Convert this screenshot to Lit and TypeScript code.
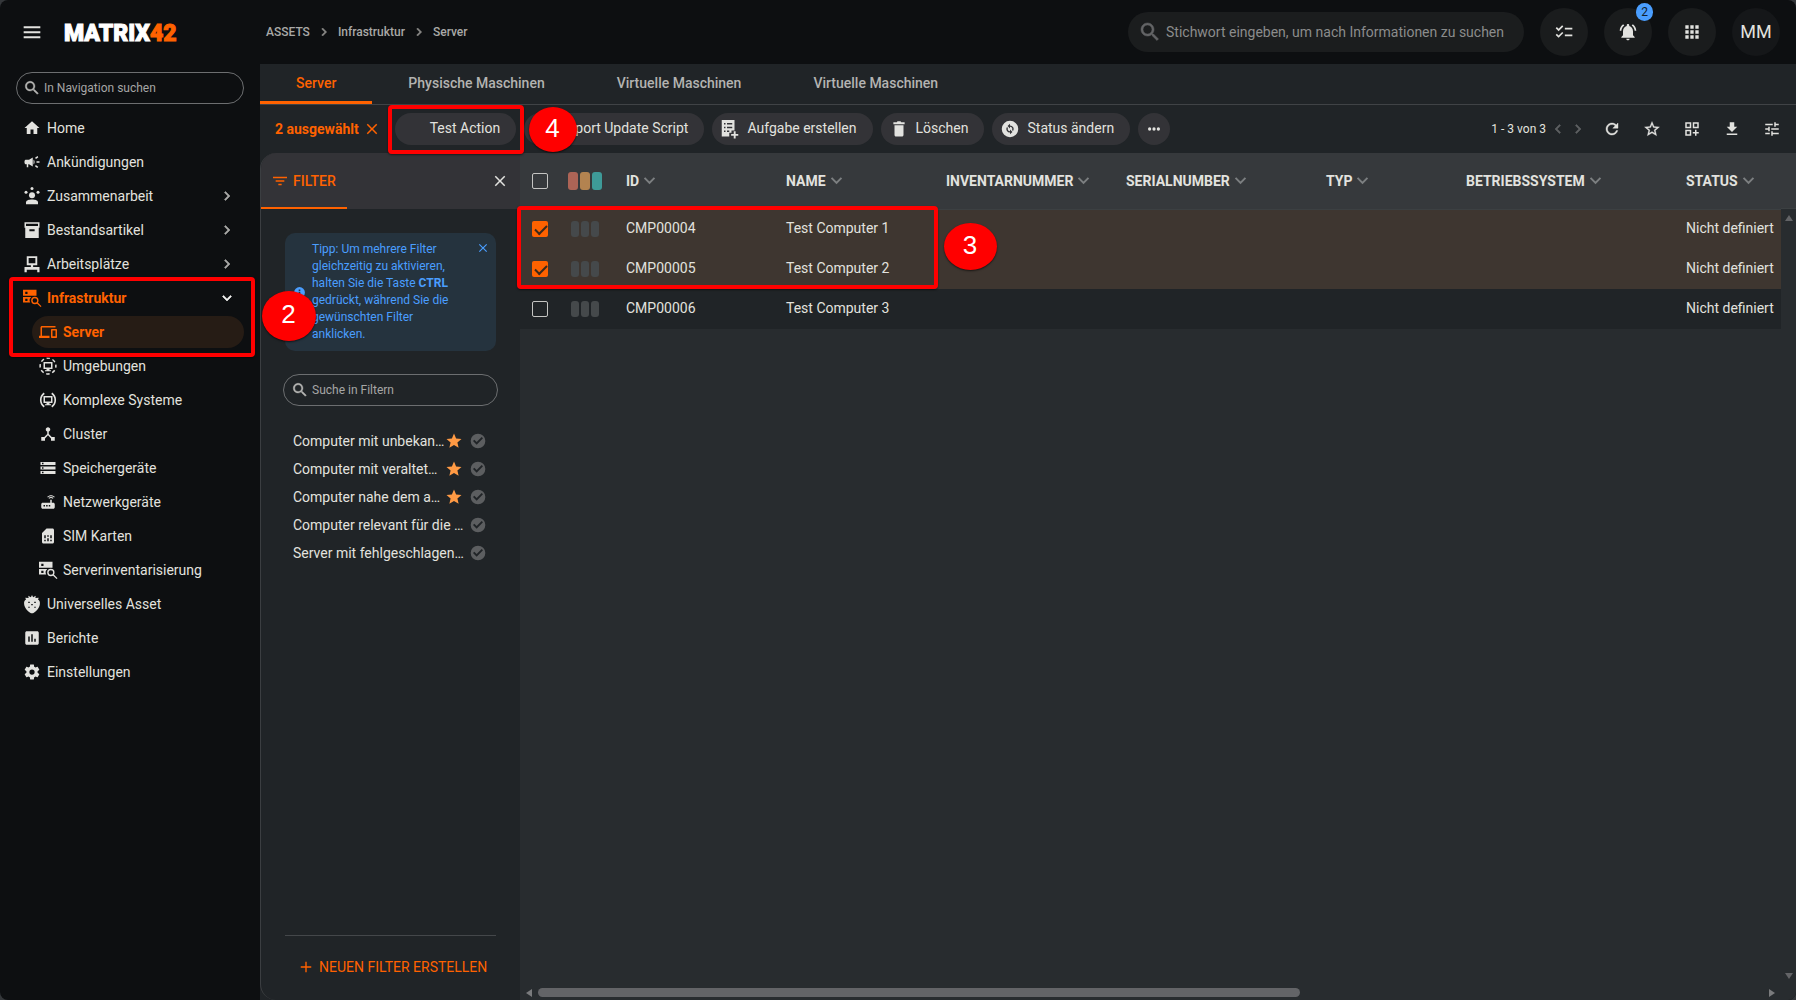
import { LitElement, html, css, svg, nothing } from "lit";
import type { SVGTemplateResult } from "lit";
import { customElement, property, state } from "lit/decorators.js";
import { classMap } from "lit/directives/class-map.js";

const SERVER_SEARCH = svg`
  <path fill-rule="evenodd" d="M0 1h18v8H0zM3 3.5v3h3v-3z"/>
  <path fill-rule="evenodd" d="M0 10.500h11.200a6 6 0 0 0-1.600 7.500H0zM3 13v3h3v-3z"/>
  <path fill="none" stroke="currentColor" stroke-width="1.800" d="M18.800 18.300 24 23.500"/>
  <circle cx="15.800" cy="15.300" r="4" fill="none" stroke="currentColor" stroke-width="1.800"/>`;

const MONITOR = svg`<path fill-rule="evenodd" d="M6 6.500h12v9.500h-4v1.500h2v1.500H8v-1.500h2V16H6zM8 8.500V14h8V8.500z"/>`;

const ICONS: Record<string, SVGTemplateResult> = {
  home: svg`<path d="M10 20v-6h4v6h5v-8h3L12 3 2 12h3v8z"/>`,
  campaign: svg`<path d="M18 11v2h4v-2h-4zm-2 6.610c.96.710 2.210 1.650 3.200 2.390.4-.53.8-1.070 1.200-1.600-.99-.74-2.240-1.680-3.200-2.400-.4.540-.8 1.080-1.200 1.610zM20.400 5.600c-.4-.53-.8-1.070-1.200-1.600-.99.740-2.240 1.680-3.200 2.400.4.530.8 1.070 1.200 1.600.96-.72 2.210-1.650 3.200-2.400zM4 9c-1.100 0-2 .9-2 2v2c0 1.100.9 2 2 2h1v4h2v-4h1l5 3V6L8 9H4zm11.500 3c0-1.330-.58-2.530-1.500-3.350v6.690c.92-.81 1.500-2.010 1.500-3.340z"/>`,
  people: svg`<circle cx="12" cy="2" r="2"/><circle cx="4" cy="7" r="2"/><circle cx="20" cy="7" r="2"/><circle cx="12" cy="11" r="4"/><path d="M4 23v-2.500C4 17.500 8 16.500 12 16.500s8 1 8 4V23z"/>`,
  archive: svg`<path fill-rule="evenodd" d="M2 1.500h20V9h-1v13.500H3V9H2zM4 3.500v3h16v-3zM8.500 11v2.500h7V11z"/>`,
  desk: svg`<path fill-rule="evenodd" d="M5 1.500h14v12h-5.500V16H22v7h-3v-3.500H5V23H2v-7h8.500v-2.500H5zM7.500 4v7h9V4z"/>`,
  serverSearch: SERVER_SEARCH,
  devices: svg`<path d="M4 6h18V4H4c-1.100 0-2 .9-2 2v11H0v3h14v-3H4V6zm19 2h-6c-.55 0-1 .45-1 1v10c0 .55.45 1 1 1h6c.55 0 1-.45 1-1V9c0-.55-.45-1-1-1zm-1 9.500h-4V10h4v7.500z"/>`,
  environment: svg`${MONITOR}<circle cx="12" cy="12" r="10.500" fill="none" stroke="currentColor" stroke-width="2" stroke-dasharray="4.600 3.650" stroke-dashoffset="2.300"/>`,
  complex: svg`${MONITOR}<path fill="none" stroke="currentColor" stroke-width="2.200" d="M7 3a11 11 0 0 0 0 18M17 3a11 11 0 0 1 0 18"/>`,
  cluster: svg`<path d="M17 16l-4-4V8.820C14.160 8.400 15 7.300 15 6c0-1.660-1.340-3-3-3S9 4.340 9 6c0 1.300.84 2.400 2 2.820V12l-4 4H3v5h5v-3.050l4-4.200 4 4.200V21h5v-5h-4z"/>`,
  storage: svg`<path d="M2 20h20v-4H2v4zm2-3h2v2H4v-2zM2 4v4h20V4H2zm4 3H4V5h2v2zm-4 7h20v-4H2v4zm2-3h2v2H4v-2z"/>`,
  router: svg`<path d="M20.200 5.900l.8-.8C19.600 3.700 17.800 3 16 3s-3.600.7-5 2.100l.8.800C13 4.800 14.500 4.200 16 4.200s3 .6 4.200 1.700zm-.9.800c-.9-.9-2.100-1.400-3.300-1.400s-2.400.5-3.300 1.400l.8.800c.7-.7 1.600-1 2.500-1 .9 0 1.800.3 2.500 1l.8-.8zM19 13h-2V9h-2v4H5c-1.100 0-2 .9-2 2v4c0 1.100.9 2 2 2h14c1.100 0 2-.9 2-2v-4c0-1.100-.9-2-2-2zM8 18H6v-2h2v2zm3.500 0h-2v-2h2v2zm3.500 0h-2v-2h2v2z"/>`,
  sim: svg`<path d="M20 4c0-1.100-.89-2-2-2h-8L4 8v12c0 1.100.9 2 2 2h12c1.100 0 2-.9 2-2V4zM9 19H7v-2h2v2zm8 0h-2v-2h2v2zm-8-4H7v-4h2v4zm4 4h-2v-4h2v4zm0-6h-2v-2h2v2zm4 2h-2v-4h2v4z"/>`,
  berry: svg`<path fill-rule="evenodd" d="M12 0l1.500 3L17 1l-.5 3 4.500-.5-1 2.500c2 1 2.800 3 2.500 6-.5 5-4.500 9.500-8 11.500a5 5 0 0 1-5 0C6 21.500 2 17 1.500 12 1.200 9 2 7 4 6L3 3.500 7.500 4 7 1l3.500 2zM7 9v1.500h2V9zm8 0v1.500h2V9zm-4 3v1.500h2V12zm-4 3.500V17h2v-1.500zm8 0V17h2v-1.500z"/>`,
  report: svg`<path d="M19 3H5c-1.100 0-2 .9-2 2v14c0 1.100.9 2 2 2h14c1.100 0 2-.9 2-2V5c0-1.100-.9-2-2-2zM9 17H7v-7h2v7zm4 0h-2V7h2v10zm4 0h-2v-4h2v4z"/>`,
  cog: svg`<path d="M12,15.500A3.500,3.500 0 0,1 8.500,12A3.500,3.500 0 0,1 12,8.500A3.500,3.500 0 0,1 15.500,12A3.500,3.500 0 0,1 12,15.500M19.430,12.970C19.470,12.650 19.500,12.330 19.500,12C19.500,11.670 19.470,11.340 19.430,11L21.540,9.370C21.730,9.220 21.780,8.950 21.660,8.730L19.660,5.270C19.540,5.050 19.270,4.960 19.050,5.050L16.560,6.050C16.040,5.660 15.500,5.320 14.870,5.070L14.500,2.420C14.460,2.180 14.250,2 14,2H10C9.750,2 9.540,2.180 9.500,2.420L9.130,5.070C8.500,5.320 7.960,5.660 7.440,6.050L4.950,5.050C4.730,4.960 4.460,5.050 4.340,5.270L2.340,8.730C2.210,8.950 2.270,9.220 2.460,9.370L4.570,11C4.530,11.340 4.500,11.670 4.500,12C4.500,12.330 4.530,12.650 4.570,12.970L2.460,14.630C2.270,14.780 2.210,15.050 2.340,15.270L4.340,18.730C4.460,18.950 4.730,19.030 4.950,18.950L7.440,17.940C7.960,18.340 8.500,18.680 9.130,18.930L9.500,21.580C9.540,21.820 9.750,22 10,22H14C14.250,22 14.460,21.820 14.500,21.580L14.870,18.930C15.500,18.670 16.040,18.340 16.560,17.940L19.050,18.950C19.270,19.030 19.540,18.950 19.660,18.730L21.660,15.270C21.780,15.050 21.730,14.780 21.540,14.630L19.430,12.970Z"/>`,
  search: svg`<path stroke="currentColor" stroke-width="0.500" d="M15.500 14h-.79l-.28-.27C15.410 12.590 16 11.110 16 9.500 16 5.910 13.090 3 9.500 3S3 5.910 3 9.500 5.910 16 9.500 16c1.610 0 3.090-.59 4.230-1.570l.27.280v.79l5 4.990L20.490 19l-4.990-5zm-6 0C7.010 14 5 11.990 5 9.500S7.010 5 9.500 5 14 7.010 14 9.500 11.990 14 9.500 14z"/>`,
  menu: svg`<path d="M2 5h20v2.500H2zM2 11h20v2.500H2zM2 17h20v2.500H2z"/>`,
  right: svg`<path stroke="currentColor" stroke-width="0.800" d="M8.590 16.590 13.170 12 8.590 7.410 10 6l6 6-6 6z"/>`,
  left: svg`<path stroke="currentColor" stroke-width="0.800" d="M15.410 16.590 10.830 12l4.580-4.590L14 6l-6 6 6 6z"/>`,
  down: svg`<path stroke="currentColor" stroke-width="0.800" d="M7.410 8.590 12 13.170l4.590-4.580L18 10l-6 6-6-6z"/>`,
  sort: svg`<path fill="none" stroke="currentColor" stroke-width="2.800" d="M5 8.300l7 7 7-7"/>`,
  close: svg`<path d="M19 6.410 17.590 5 12 10.590 6.410 5 5 6.410 10.590 12 5 17.590 6.410 19 12 13.410 17.590 19 19 17.590 13.410 12z"/>`,
  checklist: svg`<path d="M22 7h-9v2h9V7zm0 8h-9v2h9v-2zM5.540 11L2 7.460l1.410-1.410 2.120 2.120 4.240-4.240 1.410 1.410L5.540 11zm0 8L2 15.460l1.410-1.410 2.120 2.120 4.240-4.240 1.410 1.410L5.540 19z"/>`,
  bell: svg`<path d="M7.580 4.080L6.150 2.650C3.750 4.480 2.170 7.300 2.030 10.500h2c.15-2.650 1.510-4.970 3.550-6.420zm12.390 6.420h2c-.15-3.200-1.730-6.020-4.120-7.850l-1.420 1.430c2.020 1.450 3.390 3.770 3.540 6.420zM18 11c0-3.070-1.640-5.640-4.500-6.320V4c0-.83-.67-1.500-1.500-1.500s-1.500.67-1.500 1.500v.68C7.630 5.360 6 7.920 6 11v5l-2 2v1h16v-1l-2-2v-5zm-6 11c.14 0 .27-.01.4-.04.65-.14 1.180-.58 1.440-1.180.1-.24.15-.5.150-.78h-4c.01 1.100.9 2 2.010 2z"/>`,
  apps: svg`<path d="M4 8h4V4H4v4zm6 12h4v-4h-4v4zm-6 0h4v-4H4v4zm0-6h4v-4H4v4zm6 0h4v-4h-4v4zm6-10v4h4V4h-4zm-6 4h4V4h-4v4zm6 6h4v-4h-4v4zm0 6h4v-4h-4v4z"/>`,
  refresh: svg`<path stroke="currentColor" stroke-width="0.500" d="M17.650 6.350C16.200 4.900 14.210 4 12 4c-4.420 0-7.990 3.580-7.990 8s3.570 8 7.990 8c3.730 0 6.840-2.550 7.730-6h-2.080c-.82 2.330-3.040 4-5.650 4-3.310 0-6-2.690-6-6s2.690-6 6-6c1.660 0 3.140.69 4.220 1.780L13 11h7V4l-2.350 2.350z"/>`,
  starOutline: svg`<path stroke="currentColor" stroke-width="0.400" d="M22 9.240l-7.190-.62L12 2 9.190 8.630 2 9.240l5.460 4.730L5.820 21 12 17.270 18.180 21l-1.630-7.030L22 9.240zM12 15.400l-3.760 2.270 1-4.280-3.320-2.880 4.380-.38L12 6.100l1.710 4.040 4.380.380-3.320 2.880 1 4.280L12 15.400z"/>`,
  star: svg`<path d="M12 17.270 18.180 21l-1.640-7.030L22 9.240l-7.190-.61L12 2 9.190 8.630 2 9.240l5.460 4.730L5.820 21z"/>`,
  widgets: svg`<path d="M3 11h8V3H3v8zm2-6h4v4H5V5zm8-2v8h8V3h-8zm6 6h-4V5h4v4zM3 21h8v-8H3v8zm2-6h4v4H5v-4zm13-2h-2v3h-3v2h3v3h2v-3h3v-2h-3v-3z"/>`,
  download: svg`<path d="M5 20h14v-2H5v2zM19 9h-4V3H9v6H5l7 7 7-7z"/>`,
  tune: svg`<path d="M3 17v2h6v-2H3zM3 5v2h10V5H3zm10 16v-2h8v-2h-8v-2h-2v6h2zM7 9v2H3v2h4v2h2V9H7zm14 4v-2H11v2h10zm-6-4h2V7h4V5h-4V3h-2v6z"/>`,
  filter: svg`<path d="M9.500 18.500h5V16h-5v2.500zM1.500 5.500V8h21V5.500h-21zm4 7.700h13v-2.400h-13v2.400z"/>`,
  info: svg`<path d="M12 2a10 10 0 1 0 0 20 10 10 0 0 0 0-20zm1.500 15h-3v-6.500h3V17zm0-8h-3V6.300h3V9z"/>`,
  check: svg`<path d="M12 1a11 11 0 1 0 0 22 11 11 0 0 0 0-22zm-2 16.500-5.500-5.500 2-2 3.500 3.500L17.500 6l2 2z"/>`,
  plus: svg`<path d="M21 13.200h-7.800V21h-2.400v-7.800H3v-2.400h7.800V3h2.400v7.800H21z"/>`,
  task: svg`<path fill-rule="evenodd" d="M1 0h17v14h-4v3h-3v5H1zM4 4v2h2V4zm4 0v2h7V4zM4 9v2h2V9zm4 0v2h7V9zM4 14v2h2v-2zm4 0v2h3v-2z"/><path d="M17 15h2.500v3.500H23V21h-3.500v3.500H17V21h-3.500v-2.500H17z"/>`,
  trash: svg`<path d="M6 20c0 1.100.9 2 2 2h8c1.100 0 2-.9 2-2V7H6v13zM19.500 3H15l-1-1.500h-4L9 3H4.500v2.500h15V3z"/>`,
  status: svg`<path fill-rule="evenodd" d="M12 1a11 11 0 1 0 0 22 11 11 0 0 0 0-22zm0 4v2.200a4.800 4.800 0 0 1 4 7.500l-1.300-1.300A3.100 3.100 0 0 0 12 8.900v2.400L8.700 8.100zm0 14v-2.200a4.800 4.800 0 0 1-4-7.500l1.300 1.300a3.100 3.100 0 0 0 2.700 4.500v-2.400l3.300 3.200z"/>`,
  more: svg`<circle cx="4.500" cy="12" r="2.800"/><circle cx="12" cy="12" r="2.800"/><circle cx="19.500" cy="12" r="2.800"/>`,
};

@customElement("ui-icon")
class UiIcon extends LitElement {
  @property() name = "";
  @property({ type: Number }) size = 18;

  static styles = css`
    :host { display: inline-flex; flex: none; }
    .glyph { display: block; fill: currentColor; overflow: visible; }
  `;

  render() {
    return html`<svg class="glyph" width=${this.size} height=${this.size} viewBox="0 0 24 24" aria-hidden="true">${ICONS[this.name] ?? nothing}</svg>`;
  }
}

interface NavItem {
  label: string;
  icon: string;
  expandable?: boolean;
  open?: boolean;
  children?: NavItem[];
  current?: boolean;
}

const NAV: NavItem[] = [
  { label: "Home", icon: "home" },
  { label: "Ankündigungen", icon: "campaign" },
  { label: "Zusammenarbeit", icon: "people", expandable: true },
  { label: "Bestandsartikel", icon: "archive", expandable: true },
  { label: "Arbeitsplätze", icon: "desk", expandable: true },
  {
    label: "Infrastruktur", icon: "serverSearch", expandable: true, open: true,
    children: [
      { label: "Server", icon: "devices", current: true },
      { label: "Umgebungen", icon: "environment" },
      { label: "Komplexe Systeme", icon: "complex" },
      { label: "Cluster", icon: "cluster" },
      { label: "Speichergeräte", icon: "storage" },
      { label: "Netzwerkgeräte", icon: "router" },
      { label: "SIM Karten", icon: "sim" },
      { label: "Serverinventarisierung", icon: "serverSearch" },
    ],
  },
  { label: "Universelles Asset", icon: "berry" },
  { label: "Berichte", icon: "report" },
  { label: "Einstellungen", icon: "cog" },
];

const TABS = ["Server", "Physische Maschinen", "Virtuelle Maschinen", "Virtuelle Maschinen"];

const ACTIONS = [
  { label: "Test Action", icon: "" },
  { label: "Import Update Script", icon: "" },
  { label: "Aufgabe erstellen", icon: "task" },
  { label: "Löschen", icon: "trash" },
  { label: "Status ändern", icon: "status" },
];

const TOOLS = [
  { label: "Aktualisieren", icon: "refresh" },
  { label: "Favorit", icon: "starOutline" },
  { label: "Widget hinzufügen", icon: "widgets" },
  { label: "Herunterladen", icon: "download" },
  { label: "Anpassen", icon: "tune" },
];

const FILTERS = [
  { label: "Computer mit unbekan…", starred: true },
  { label: "Computer mit veraltet…", starred: true },
  { label: "Computer nahe dem a…", starred: true },
  { label: "Computer relevant für die …", starred: false },
  { label: "Server mit fehlgeschlagen…", starred: false },
];

const COLUMNS = [
  { key: "id", label: "ID" },
  { key: "name", label: "NAME" },
  { key: "inventory", label: "INVENTARNUMMER" },
  { key: "serial", label: "SERIALNUMBER" },
  { key: "type", label: "TYP" },
  { key: "os", label: "BETRIEBSSYSTEM" },
  { key: "status", label: "STATUS" },
];

interface Row {
  id: string;
  name: string;
  status: string;
  selected: boolean;
}

@customElement("app-root")
class AppRoot extends LitElement {
  @state() private rows: Row[] = [
    { id: "CMP00004", name: "Test Computer 1", status: "Nicht definiert", selected: true },
    { id: "CMP00005", name: "Test Computer 2", status: "Nicht definiert", selected: true },
    { id: "CMP00006", name: "Test Computer 3", status: "Nicht definiert", selected: false },
  ];

  static styles = css`
    :host {
      display: block;
      position: relative;
      background: #34373a;
      font-family: Roboto, "Liberation Sans", sans-serif;
      font-size: 14px;
      line-height: 20px;
      color: #e2e2df;
    }
    * { box-sizing: border-box; }
    button, input {
      font: inherit;
      color: inherit;
      background: none;
      border: 0;
      padding: 0;
      margin: 0;
    }
    a { color: inherit; text-decoration: none; }
    ul, ol { list-style: none; margin: 0; padding: 0; }
    .app {
      display: flex;
      flex-direction: column;
      min-height: 100vh;
      background: #0d0f11;
      border-radius: 8px;
      overflow: hidden;
    }

    .header {
      display: flex;
      align-items: center;
      height: 64px;
      padding-right: 16px;
    }
    .brand {
      display: flex;
      align-items: center;
      gap: 22px;
      width: 260px;
      padding-left: 22px;
    }
    .burger { display: flex; }
    .logo {
      padding-top: 3px;
      font-size: 23px;
      font-weight: 900;
      line-height: 24px;
      color: #fff;
      -webkit-text-stroke: 1px currentColor;
    }
    .logo-accent { color: #ff6200; }
    .crumbs {
      display: flex;
      align-items: center;
      gap: 6px;
      padding-left: 6px;
      font-size: 12px;
      font-weight: 500;
      color: #a9a9a7;
    }
    .crumb { display: flex; align-items: center; gap: 6px; }
    .crumb ui-icon { color: #8a8a88; }
    .header-right { display: flex; align-items: center; gap: 16px; margin-left: auto; }
    .global-search {
      display: flex;
      align-items: center;
      gap: 4px;
      width: 396px;
      height: 40px;
      padding: 0 4px 0 10px;
      border-radius: 20px;
      background: #1b1d1e;
      color: #636466;
    }
    .field { flex: 1; min-width: 0; outline: 0; }
    .field::placeholder { color: #8b8c8c; opacity: 1; }
    .round {
      position: relative;
      display: flex;
      align-items: center;
      justify-content: center;
      width: 48px;
      height: 48px;
      border-radius: 50%;
      background: #1a1c1d;
    }
    .avatar { background: #151719; font-size: 18px; }
    .badge {
      position: absolute;
      top: -5px;
      right: -1px;
      width: 17px;
      height: 18px;
      border-radius: 9px;
      background: #4a9eff;
      color: #10202e;
      font-size: 12px;
      line-height: 18px;
      text-align: center;
    }

    .body { flex: 1; display: flex; min-height: 0; }
    .sidebar { width: 260px; flex: none; padding: 8px 16px; }
    .pill-search {
      display: flex;
      align-items: center;
      gap: 3px;
      height: 32px;
      padding: 0 7px;
      border: 1px solid #6c6e70;
      border-radius: 16px;
      font-size: 12px;
      color: #b4b4b2;
    }
    .nav-search { padding: 0 6px; }
    .pill-search .field::placeholder { color: #a6a6a5; }
    .nav { margin-top: 8px; display: grid; gap: 2px; }
    .nav-list { display: grid; gap: 2px; }
    .nav-link {
      display: flex;
      align-items: center;
      gap: 6px;
      height: 32px;
      padding: 0 8px 0 7px;
      border-radius: 16px;
    }
    .nav-label { flex: 1; }
    .nav-sub { margin: 2px 0 0 16px; }
    .nav-link.active { color: #ff6200; font-weight: 700; }
    .nav-link.current { background: #261c15; }
    .caret { color: #a8a8a6; }
    .active .caret { color: #f2f2f0; }

    .main { flex: 1; display: flex; flex-direction: column; min-width: 0; background: #202427; }
    .tabs { display: flex; height: 41px; border-bottom: 1px solid #404346; }
    .tab {
      display: flex;
      align-items: center;
      height: 40px;
      padding: 1px 36px 0;
      border-bottom: 3px solid transparent;
      color: #b3b3b1;
      font-weight: 500;
    }
    .tab.on { color: #ff6200; border-color: #ff6200; }

    .toolbar { display: flex; align-items: center; height: 48px; padding: 0 4px 0 15px; }
    .selection { display: flex; align-items: center; gap: 4px; color: #ff6200; font-weight: 700; margin-right: 14px; }
    .selection button { display: flex; }
    .actions { display: flex; gap: 8px; }
    .action {
      display: flex;
      align-items: center;
      gap: 8px;
      height: 32px;
      padding: 0 16px 0 9px;
      border-radius: 16px;
      background: #333337;
      white-space: nowrap;
    }
    .action-label { padding-bottom: 2px; }
    .action.more { padding: 0; width: 32px; justify-content: center; }
    .pager { display: flex; align-items: center; margin-left: auto; font-size: 12px; }
    .pager button { display: flex; width: 20px; justify-content: center; color: #5d5f61; }
    .pager span { margin-right: 2px; }
    .tools { display: flex; margin-left: 4px; }
    .tool { display: flex; align-items: center; justify-content: center; width: 40px; height: 40px; }

    .content { flex: 1; display: flex; min-height: 0; }
    .filter {
      display: flex;
      flex-direction: column;
      width: 260px;
      flex: none;
      border-left: 1px solid #3b3e41;
      border-radius: 16px 0 0 16px;
      overflow: hidden;
    }
    .filter-head {
      display: flex;
      align-items: stretch;
      justify-content: space-between;
      height: 56px;
      padding-right: 11px;
      background: #333337;
    }
    .filter-tab {
      display: flex;
      align-items: center;
      gap: 5px;
      width: 86px;
      padding: 2px 0 0 11px;
      border-bottom: 2px solid #ff6200;
      color: #ff6200;
      font-weight: 500;
    }
    .icon-button { display: flex; align-items: center; }
    .filter-body { flex: 1; display: flex; flex-direction: column; padding: 24px 22px 0; }
    .tip {
      display: flex;
      align-items: center;
      gap: 6px;
      margin: 0 2px;
      padding: 8px 6px 8px 8px;
      border-radius: 10px;
      background: #25333e;
      color: #4a9eff;
      font-size: 12px;
      line-height: 17px;
    }
    .tip-text { flex: 1; margin: 0; padding-right: 12px; }
    .tip-close { display: flex; align-self: flex-start; }
    .filter-search { margin: 23px 0 21px; }
    .filter-row { display: flex; align-items: center; height: 28px; padding: 0 12px 0 10px; }
    .filter-name {
      flex: 1;
      min-width: 0;
      white-space: nowrap;
    }
    .filter-row .star { color: #ff9a44; margin-right: 7px; }
    .filter-row .check { color: #5c5e60; }
    .plain .check { margin-left: 5px; }
    .filter-foot { margin: auto 2px 0; border-top: 1px solid #44474a; padding: 21px 0 23px; }
    .new-filter {
      display: flex;
      align-items: center;
      gap: 6px;
      width: 100%;
      padding-left: 14px;
      color: #ff6200;
      white-space: nowrap;
    }

    .grid { flex: 1; min-width: 0; display: flex; flex-direction: column; background: #282c2f; }
    .grid-view { flex: 1; display: flex; min-height: 0; }
    .table-wrap { flex: 1; min-width: 0; }
    .table { width: 100%; table-layout: fixed; border-collapse: collapse; }
    .col-check { width: 41px; }
    .col-flags { width: 55px; }
    .col-id, .col-name { width: 160px; }
    .col-inventory { width: 180px; }
    .col-serial { width: 200px; }
    .col-type { width: 140px; }
    .col-status { width: 105px; }
    th, td { padding: 0 0 0 10px; text-align: left; white-space: nowrap; }
    th { height: 56px; background: #36393c; border-bottom: 1px solid #3c4042; font-weight: 700; }
    td { height: 40px; padding-bottom: 2px; background: #202427; }
    .chosen td { background: #3e3630; }
    .pad-check { padding: 0 0 0 12px; }
    .pad-flags { padding: 0; }
    .sort { display: flex; align-items: center; gap: 2px; font-weight: 700; }
    .sort ui-icon { color: #7c7f81; }
    .box {
      appearance: none;
      display: block;
      width: 16px;
      height: 16px;
      margin: 0;
      border: 1px solid #c4c4c2;
      border-radius: 2px;
    }
    .box:checked {
      border: 0;
      background: #ff6200;
      position: relative;
    }
    .box:checked::after {
      content: "";
      position: absolute;
      left: 3px;
      top: 4px;
      width: 10px;
      height: 5px;
      border-left: 2px solid #3a2a1c;
      border-bottom: 2px solid #3a2a1c;
      transform: rotate(-45deg);
    }
    .flags { display: flex; gap: 2px; }
    .flag { width: 8px; height: 16px; border-radius: 3px; background: #45494b; }
    .flags.large { padding-left: 7px; }
    .flags.small { padding-left: 10px; }
    .large .flag { width: 10px; height: 18px; }
    .flag.red { background: #ad6456; }
    .flag.amber { background: #b38350; }
    .flag.teal { background: #3e9a98; }

    .vbar {
      display: flex;
      flex-direction: column;
      justify-content: space-between;
      align-items: center;
      width: 15px;
      padding-bottom: 6px;
    }
    .vbar-top { width: 100%; height: 65px; }
    .vbar-head { display: block; height: 56px; background: #36393c; border-bottom: 1px solid #3c4042; margin-bottom: 6px; }
    .hbar { display: flex; align-items: center; gap: 6px; height: 15px; padding: 0 21px 0 6px; }
    .thumb { width: 61%; height: 9px; border-radius: 5px; background: #636467; }
    .arrow { display: block; width: 0; height: 0; border: 4px solid transparent; flex: none; }
    .arrow.up { border-bottom: 6px solid #636467; border-top: 0; margin: 0 auto; }
    .arrow.down { border-top: 6px solid #636467; border-bottom: 0; }
    .arrow.prev { border-right: 6px solid #7a7b7d; border-left: 0; }
    .arrow.next { border-left: 6px solid #7a7b7d; border-right: 0; margin-left: auto; }

    .mark {
      position: absolute;
      border: 4px solid #ff0000;
      border-radius: 4px;
      box-shadow: 0 1px 2px rgba(0, 0, 0, 0.5);
      pointer-events: none;
    }
    .mark-nav { left: 9px; top: 277px; width: 246px; height: 80px; }
    .mark-action { left: 388px; top: 105px; width: 136px; height: 49px; }
    .mark-rows { left: 517px; top: 206px; width: 421px; height: 83px; }
    .step {
      position: absolute;
      display: flex;
      align-items: center;
      justify-content: center;
      padding: 0 1px 3px 0;
      border-radius: 50%;
      background: #ff0000;
      color: #fff;
      font: 26px "Liberation Sans", sans-serif;
      box-shadow: 0 1px 2px rgba(0, 0, 0, 0.6);
      pointer-events: none;
    }
    .step-nav { left: 262px; top: 291px; width: 54px; height: 50px; }
    .step-rows { left: 944px; top: 223px; width: 53px; height: 47px; }
    .step-action { left: 529px; top: 107px; width: 48px; height: 45px; }
  `;

  private toggle(index: number) {
    this.rows = this.rows.map((r, i) => (i === index ? { ...r, selected: !r.selected } : r));
  }

  private clear() {
    this.rows = this.rows.map((r) => ({ ...r, selected: false }));
  }

  private navItem(item: NavItem): unknown {
    const active = !!(item.open || item.current);
    return html`<li>
      <a href="#" class=${classMap({ "nav-link": true, active, current: !!item.current })}>
        <ui-icon name=${item.icon}></ui-icon>
        <span class="nav-label">${item.label}</span>
        ${item.expandable ? html`<ui-icon class="caret" name=${item.open ? "down" : "right"}></ui-icon>` : nothing}
      </a>
      ${item.children ? html`<ul class="nav-list nav-sub">${item.children.map((c) => this.navItem(c))}</ul>` : nothing}
    </li>`;
  }

  private renderHeader() {
    return html`<header class="header">
      <div class="brand">
        <button class="burger" aria-label="Menü"><ui-icon name="menu" size="20"></ui-icon></button>
        <a href="#" class="logo">MATRIX<span class="logo-accent">42</span></a>
      </div>
      <nav aria-label="Pfad">
        <ol class="crumbs">
          <li class="crumb"><a href="#">ASSETS</a><ui-icon name="right" size="16"></ui-icon></li>
          <li class="crumb"><a href="#">Infrastruktur</a><ui-icon name="right" size="16"></ui-icon></li>
          <li class="crumb"><a href="#">Server</a></li>
        </ol>
      </nav>
      <div class="header-right">
        <label class="global-search">
          <ui-icon name="search" size="24"></ui-icon>
          <input class="field" type="text" aria-label="Suche" placeholder="Stichwort eingeben, um nach Informationen zu suchen" />
        </label>
        <button class="round" aria-label="Aufgaben"><ui-icon name="checklist" size="20"></ui-icon></button>
        <button class="round" aria-label="Benachrichtigungen"><ui-icon name="bell" size="20"></ui-icon><span class="badge">2</span></button>
        <button class="round" aria-label="Anwendungen"><ui-icon name="apps" size="20"></ui-icon></button>
        <button class="round avatar">MM</button>
      </div>
    </header>`;
  }

  private renderFilter() {
    return html`<aside class="filter">
      <div class="filter-head">
        <button class="filter-tab"><ui-icon name="filter" size="16"></ui-icon>FILTER</button>
        <button class="icon-button" aria-label="Filter schließen"><ui-icon name="close" size="18"></ui-icon></button>
      </div>
      <div class="filter-body">
        <div class="tip">
          <ui-icon name="info" size="13"></ui-icon>
          <p class="tip-text">Tipp: Um mehrere Filter gleichzeitig zu aktivieren, halten Sie die Taste <b>CTRL</b> gedrückt, während Sie die gewünschten Filter anklicken.</p>
          <button class="tip-close" aria-label="Tipp schließen"><ui-icon name="close" size="14"></ui-icon></button>
        </div>
        <label class="pill-search filter-search">
          <ui-icon name="search" size="18"></ui-icon>
          <input class="field" type="text" aria-label="Filtersuche" placeholder="Suche in Filtern" />
        </label>
        <ul>
          ${FILTERS.map((f) => html`<li class=${classMap({ "filter-row": true, plain: !f.starred })}>
            <a href="#" class="filter-name">${f.label}</a>
            ${f.starred ? html`<ui-icon class="star" name="star" size="18"></ui-icon>` : nothing}
            <ui-icon class="check" name="check" size="16"></ui-icon>
          </li>`)}
        </ul>
        <div class="filter-foot">
          <button class="new-filter"><ui-icon name="plus" size="14"></ui-icon>NEUEN FILTER ERSTELLEN</button>
        </div>
      </div>
    </aside>`;
  }

  private renderGrid() {
    return html`<section class="grid">
      <div class="grid-view">
        <div class="table-wrap">
          <table class="table">
            <colgroup>
              <col class="col-check" /><col class="col-flags" />
              ${COLUMNS.map((c) => html`<col class="col-${c.key}" />`)}
            </colgroup>
            <thead>
              <tr>
                <th class="pad-check"><input class="box" type="checkbox" aria-label="Alle auswählen" /></th>
                <th class="pad-flags"><span class="flags large"><i class="flag red"></i><i class="flag amber"></i><i class="flag teal"></i></span></th>
                ${COLUMNS.map((c) => html`<th><button class="sort">${c.label}<ui-icon name="sort" size="17"></ui-icon></button></th>`)}
              </tr>
            </thead>
            <tbody>
              ${this.rows.map((r, i) => html`<tr class=${classMap({ chosen: r.selected })}>
                <td class="pad-check"><input class="box" type="checkbox" aria-label=${r.name} .checked=${r.selected} @change=${() => this.toggle(i)} /></td>
                <td class="pad-flags"><span class="flags small"><i class="flag"></i><i class="flag"></i><i class="flag"></i></span></td>
                <td>${r.id}</td><td>${r.name}</td><td></td><td></td><td></td><td></td><td>${r.status}</td>
              </tr>`)}
            </tbody>
          </table>
        </div>
        <div class="vbar"><div class="vbar-top"><i class="vbar-head"></i><i class="arrow up"></i></div><i class="arrow down"></i></div>
      </div>
      <div class="hbar"><i class="arrow prev"></i><i class="thumb"></i><i class="arrow next"></i></div>
    </section>`;
  }

  render() {
    const count = this.rows.filter((r) => r.selected).length;
    return html`
      <div class="app">
        ${this.renderHeader()}
        <div class="body">
          <aside class="sidebar">
            <label class="pill-search nav-search">
              <ui-icon name="search" size="18"></ui-icon>
              <input class="field" type="text" aria-label="Navigation durchsuchen" placeholder="In Navigation suchen" />
            </label>
            <nav class="nav" aria-label="Hauptnavigation"><ul class="nav-list">${NAV.map((n) => this.navItem(n))}</ul></nav>
          </aside>
          <main class="main">
            <div class="tabs">${TABS.map((t, i) => html`<button class=${classMap({ tab: true, on: i === 0 })}>${t}</button>`)}</div>
            <div class="toolbar">
              <div class="selection">${count} ausgewählt
                <button aria-label="Auswahl aufheben" @click=${this.clear}><ui-icon name="close" size="18"></ui-icon></button>
              </div>
              <div class="actions">
                ${ACTIONS.map((a) => html`<button class="action"><ui-icon name=${a.icon}></ui-icon><span class="action-label">${a.label}</span></button>`)}
                <button class="action more" aria-label="Mehr"><ui-icon name="more" size="14"></ui-icon></button>
              </div>
              <div class="pager">
                <span>1 - 3 von ${this.rows.length}</span>
                <button aria-label="Vorherige Seite"><ui-icon name="left"></ui-icon></button>
                <button aria-label="Nächste Seite"><ui-icon name="right"></ui-icon></button>
              </div>
              <div class="tools">${TOOLS.map((t) => html`<button class="tool" aria-label=${t.label}><ui-icon name=${t.icon}></ui-icon></button>`)}</div>
            </div>
            <div class="content">${this.renderFilter()}${this.renderGrid()}</div>
          </main>
        </div>
      </div>
      <div class="mark mark-nav"></div>
      <div class="mark mark-action"></div>
      <div class="mark mark-rows"></div>
      <div class="step step-nav">2</div>
      <div class="step step-rows">3</div>
      <div class="step step-action">4</div>
    `;
  }
}
